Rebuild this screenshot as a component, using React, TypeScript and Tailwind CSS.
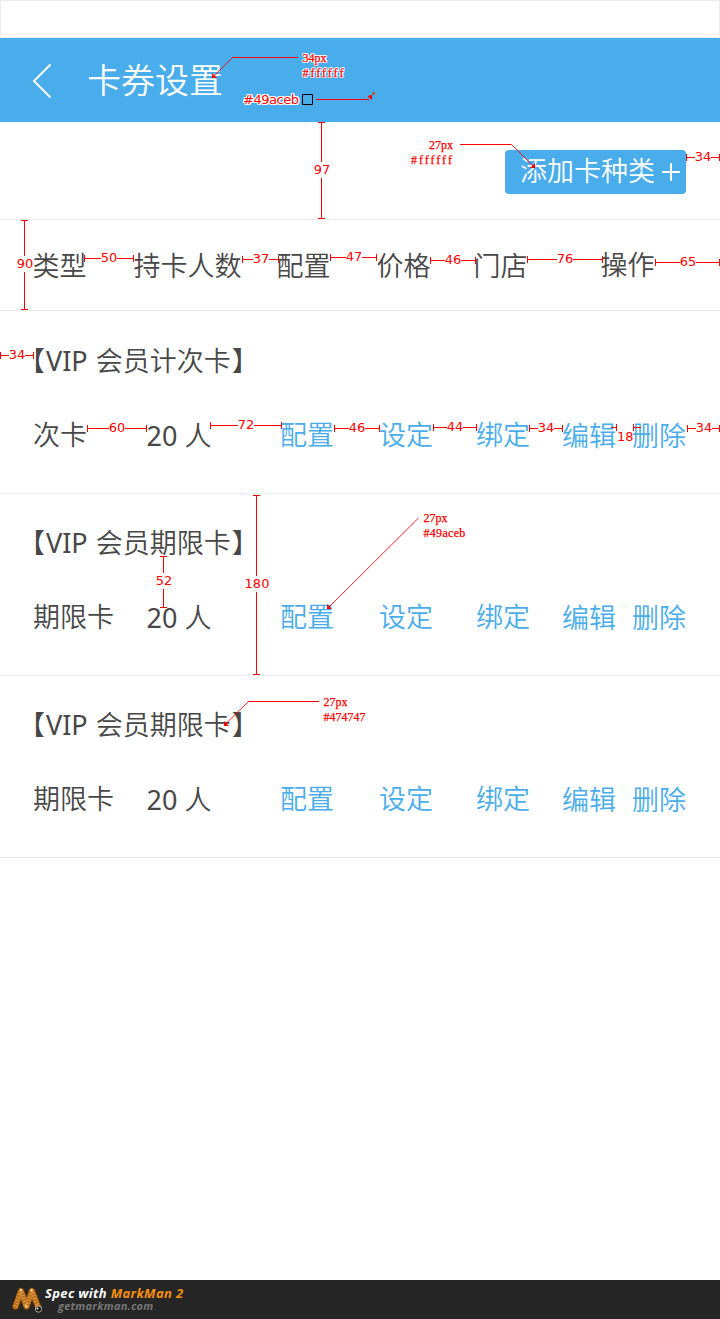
import React from "react";

type Dim = { axis: "h" | "v"; at: number; from: number; to: number; label: string; center: number };

const dims: Dim[] = [
  { axis: "h", at: 157, from: 686, to: 719, label: "34", center: 703 },
  { axis: "h", at: 258, from: 84, to: 133, label: "50", center: 109 },
  { axis: "h", at: 259, from: 242, to: 278, label: "37", center: 261 },
  { axis: "h", at: 257, from: 330, to: 376, label: "47", center: 354 },
  { axis: "h", at: 260, from: 430, to: 475, label: "46", center: 453 },
  { axis: "h", at: 259, from: 527, to: 602, label: "76", center: 565 },
  { axis: "h", at: 262, from: 655, to: 719, label: "65", center: 688 },
  { axis: "h", at: 355, from: 0, to: 33, label: "34", center: 17 },
  { axis: "h", at: 428, from: 87, to: 146, label: "60", center: 117 },
  { axis: "h", at: 425, from: 210, to: 281, label: "72", center: 246 },
  { axis: "h", at: 428, from: 334, to: 379, label: "46", center: 357 },
  { axis: "h", at: 427, from: 433, to: 476, label: "44", center: 455 },
  { axis: "h", at: 428, from: 529, to: 562, label: "34", center: 546 },
  { axis: "h", at: 428, from: 687, to: 719, label: "34", center: 704 },
  { axis: "v", at: 24, from: 220, to: 309, label: "90", center: 264 },
  { axis: "v", at: 321, from: 122, to: 218, label: "97", center: 170 },
  { axis: "v", at: 163, from: 556, to: 607, label: "52", center: 581 },
  { axis: "v", at: 256, from: 495, to: 674, label: "180", center: 584 },
];

function linePath(d: Dim) {
  const gap = 8;
  const a = d.at + 0.5;
  const c = d.center;
  return d.axis === "h"
    ? `M${d.from} ${a}H${c - gap}M${c + gap} ${a}H${d.to + 1}M${d.from + 0.5} ${a - 3.5}v7M${d.to + 0.5} ${a - 3.5}v7`
    : `M${a} ${d.from}V${c - gap}M${a} ${c + gap}V${d.to + 1}M${a - 3.5} ${d.from + 0.5}h7M${a - 3.5} ${d.to + 0.5}h7`;
}

const outline =
  "[text-shadow:1px_0_#fff,-1px_0_#fff,0_1px_#fff,0_-1px_#fff,1px_1px_#fff,-1px_-1px_#fff,1px_-1px_#fff,-1px_1px_#fff]";
const note =
  "absolute flex flex-col font-['Liberation_Serif',serif] text-[12px] leading-[15px] text-[#f00] [-webkit-text-stroke:0.25px_#f00]";

function Annotations() {
  return (
    <div className="pointer-events-none absolute inset-0 font-normal">
      <svg className="absolute inset-0" width="720" height="1319" fill="none" stroke="#f00" strokeWidth="1">
        {dims.map((d, i) => (
          <path key={i} d={linePath(d)} />
        ))}
        <path d="M611 427.5h6M616.5 424v7M633 427.5h8M633.5 424v7" />
        <path d="M232 57.5h66M316 99.5h53M460 144.5h51.5M248 701.500h71" />
        <path d="M232.5 57.5L213 77M511.500 144.500L534 167M418.500 518L328 608M248.500 701.500L225 724.500" strokeOpacity=".85" />
        <g fill="#f00" stroke="none">
          <path d="M212 73v5h5zM535 163v5h-5zM327 604v5h5zM224 721v5h5zM372 95v5l-5-4z" />
        </g>
        <path d="M372.500 92.500h2v2h-2z" stroke="#b8501c" />
        <path d="M302.500 94.500h10v10h-10z" stroke="#000" />
      </svg>
      {dims.map((d, i) => (
        <span
          key={i}
          className="absolute -translate-x-1/2 text-center font-['DejaVu_Sans',sans-serif] text-[13px] leading-4 text-[#f00]"
          style={d.axis === "h" ? { left: d.center, top: d.at - 8 } : { left: d.at + 1, top: d.center - 8 }}
        >
          {d.label}
        </span>
      ))}
      <span className="absolute left-[617px] top-[429px] font-['DejaVu_Sans',sans-serif] text-[13px] leading-4 text-[#f00]">18</span>
      <span className={`absolute left-[243px] top-[92px] font-['DejaVu_Sans',sans-serif] text-[13px] leading-4 tracking-[-0.45px] text-[#f00] ${outline}`}>#49aceb</span>
      <div className={`${note} left-[302.5px] top-[51px] ${outline}`}>
        <span>34px</span>
        <span className="tracking-[2px]">#ffffff</span>
      </div>
      <div className={`${note} left-[411px] top-[138px]`}>
        <span className="pl-[18px]">27px</span>
        <span className="tracking-[2px]">#ffffff</span>
      </div>
      <div className={`${note} left-[423.5px] top-[511px]`}>
        <span>27px</span>
        <span className="tracking-[0.3px]">#49aceb</span>
      </div>
      <div className={`${note} left-[323.5px] top-[695px]`}>
        <span>27px</span>
        <span>#474747</span>
      </div>
    </div>
  );
}

const actionCells = ["配置", "设定", "绑定"];

function CardRow({ title, kind, count }: { title: string; kind: string; count: string }) {
  return (
    <section className="h-[182px] border-b border-[#ececec] pt-[29px]">
      <h2 className="flex whitespace-pre pl-[18px] leading-10">
        <span>【</span>
        <span className="ml-px font-normal">VIP </span>
        <span className="ml-px">{title}</span>
        <span className="ml-px">】</span>
      </h2>
      <div className="mt-[34px] grid grid-cols-[114px_133px_99px_97px_86px_70px_1fr] pl-[33px] leading-10 text-[#49aceb]">
        <span className="text-[#474747]">{kind}</span>
        <span className="-ml-[0.5px] pt-px text-[#474747]">
          <span className="font-normal">{count}</span> 人
        </span>
        {actionCells.map((a) => (
          <a key={a}>{a}</a>
        ))}
        <a className="pt-px">编辑</a>
        <a className="pt-px">删除</a>
      </div>
    </section>
  );
}

function Worm() {
  return (
    <svg width="32" height="29" viewBox="0 0 32 29" fill="none" strokeLinecap="round" strokeLinejoin="round">
      <path d="M4.500 21.500L10 6L15.500 21.500L21 6L27.500 23" stroke="#5f3408" strokeWidth="7" />
      <path d="M4.500 21.500L10 6L15.500 21.500L21 6L27.500 23" stroke="#b96d1c" strokeWidth="5.500" />
      <path d="M4.500 21.500L10 6L15.500 21.500L21 6L27.500 23" stroke="#dd9a42" strokeWidth="4.500" strokeDasharray="1 2" strokeLinecap="butt" />
      <circle cx="10" cy="5" r="1.200" fill="#ffe29a" />
      <circle cx="20.500" cy="5" r="1.200" fill="#ffe29a" />
      <circle cx="15.500" cy="21.500" r="1.200" fill="#ffe29a" />
      <circle cx="27.500" cy="24" r="3.400" fill="#c9b8a0" />
      <circle cx="27.500" cy="24" r="2.600" fill="#111" />
      <circle cx="26.500" cy="23.500" r="1" fill="#fff" />
    </svg>
  );
}

export default function App() {
  return (
    <div className="relative flex h-[1319px] w-[720px] flex-col overflow-hidden bg-white font-['Noto_Sans','Noto_Sans_CJK_SC',sans-serif] text-[27px] font-[350] text-[#474747]">
      <div className="h-[38px] shrink-0 border border-[#ececec]" />
      <header className="flex h-[84px] shrink-0 items-center bg-[#49aceb] pl-[32px] text-white">
        <svg className="mt-[2px]" width="20" height="36" viewBox="0 0 20 36" fill="none" stroke="currentColor" strokeWidth="2">
          <path d="M18.500 1.500L2 18L18.500 34.500" />
        </svg>
        <h1 className="ml-[35px] text-[34px] leading-[84px]">卡券设置</h1>
      </header>
      <div className="flex h-[98px] shrink-0 justify-end border-b border-[#ececec] pr-[34px] pt-[28px]">
        <button className="flex h-[44px] w-[181px] items-center rounded bg-[#49aceb] pl-[15px] text-white">
          <span className="-mt-[2px] leading-[42px]">添加卡种类</span>
          <svg className="ml-[6px] -mt-px" width="20" height="20" viewBox="0 0 20 20" stroke="currentColor" strokeWidth="2">
            <path d="M1 10h18M10 1v18" />
          </svg>
        </button>
      </div>
      <div className="grid h-[91px] shrink-0 grid-cols-[101px_143px_100px_97px_127px_1fr] border-b border-[#ececec] pl-[32.5px] leading-[92px]">
        <span>类型</span>
        <span>持卡人数</span>
        <span>配置</span>
        <span>价格</span>
        <span>门店</span>
        <span className="-mt-px">操作</span>
      </div>
      <main className="grow pt-px">
        <CardRow title="会员计次卡" kind="次卡" count="20" />
        <CardRow title="会员期限卡" kind="期限卡" count="20" />
        <CardRow title="会员期限卡" kind="期限卡" count="20" />
      </main>
      <footer className="flex h-[39px] shrink-0 bg-[#262626] pl-[11px] pt-[5px] font-['Open_Sans',sans-serif] font-bold italic">
        <Worm />
        <div className="flex flex-col pl-[2px]">
          <span className="h-[13px] text-[13px] leading-[17px] tracking-[0.35px] text-white">
            Spec with <span className="text-[#f78f08]">MarkMan 2</span>
          </span>
          <span className="pl-[13px] text-[11px] leading-[15px] tracking-[0.25px] text-[#777]">getmarkman.com</span>
        </div>
      </footer>
      <Annotations />
    </div>
  );
}
